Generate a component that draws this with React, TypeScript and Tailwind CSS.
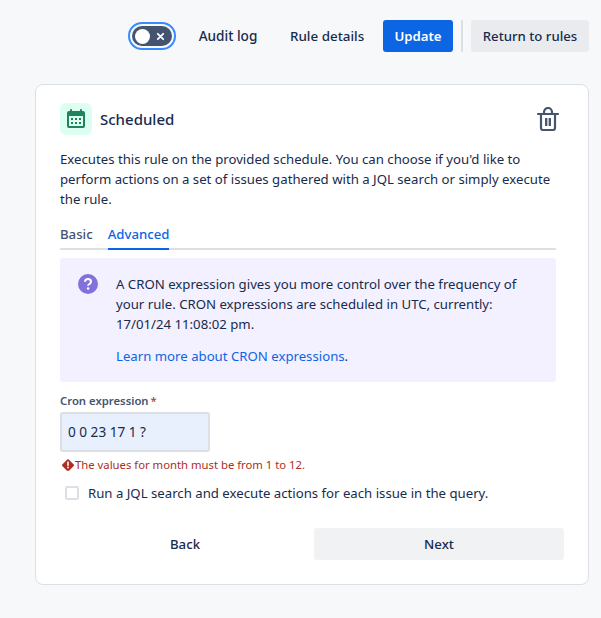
import React from "react";

function CalendarIcon() {
  return (
    <svg width="24" height="24" viewBox="0 0 24 24" fill="none">
      <path fillRule="evenodd" clipRule="evenodd" fill="#1f845a" d="M6 3a1 1 0 0 1 2 0v1h8V3a1 1 0 1 1 2 0v1h1a2 2 0 0 1 2 2v13a2 2 0 0 1-2 2H5a2 2 0 0 1-2-2V6a2 2 0 0 1 2-2h1V3zM5 9v10h14V9H5z" />
      <rect x="7" y="11" width="2" height="2" fill="#1f845a" />
      <rect x="11" y="11" width="2" height="2" fill="#1f845a" />
      <rect x="15" y="11" width="2" height="2" fill="#1f845a" />
      <rect x="7" y="15" width="2" height="2" fill="#1f845a" />
      <rect x="11" y="15" width="2" height="2" fill="#1f845a" />
      <rect x="15" y="15" width="2" height="2" fill="#1f845a" />
    </svg>
  );
}

function TrashIcon() {
  return (
    <svg width="24" height="24" viewBox="0 0 24 24" fill="none" stroke="#44546f" strokeWidth="2.2" className="-mr-1">
      <path d="M2 7h20" strokeLinecap="round" />
      <path d="M8 7V5a4 4 0 0 1 8 0v2" />
      <path d="M5 7v14a2 2 0 0 0 2 2h10a2 2 0 0 0 2-2V7" />
      <path d="M10.2 11v8M13.8 11v8" strokeWidth="2.3" />
    </svg>
  );
}

function HelpIcon() {
  return (
    <svg width="20" height="20" viewBox="0 0 20 20" className="shrink-0">
      <circle cx="10" cy="10" r="10" fill="#8270db" />
      <path d="M7 7.8C7 6 8.3 5 10 5s3 1 3 2.7c0 2.3-2.9 2.3-2.9 4" fill="none" stroke="#fff" strokeWidth="2" />
      <circle cx="10.1" cy="14.6" r="1.25" fill="#fff" />
    </svg>
  );
}

function ErrorIcon() {
  return (
    <svg width="12" height="12" viewBox="0 0 12 12" className="shrink-0">
      <path d="M6 0.3a1 1 0 0 1 .7.3l5 5a1 1 0 0 1 0 1.4l-4.4 4.4a1 1 0 0 1-.7.3H5.4a1 1 0 0 1-.7-.3L.3 7a1 1 0 0 1 0-1.4l5-5a1 1 0 0 1 .7-.3z" fill="#ae2e24" />
      <rect x="5.2" y="2.6" width="1.6" height="4.2" fill="#fff" />
      <rect x="5.2" y="7.7" width="1.6" height="1.6" fill="#fff" />
    </svg>
  );
}

export default function App() {
  return (
    <div className="h-[618px] w-[601px] overflow-hidden bg-[#f7f8f9] font-['Noto_Sans',sans-serif] text-[13.2px] leading-5 text-[#172b4d]">
      <div className="flex h-[84px] items-start justify-end pt-5 pr-3">
        <div className="mt-[2px] mr-[22px] h-7 w-12 rounded-full border-2 border-[#388bff] p-[2px]">
          <div className="flex h-5 w-full items-center justify-between rounded-full bg-[#44546f] pr-[7px] pl-[3px]">
            <span className="h-[15px] w-[15px] rounded-full bg-white" />
            <svg width="9" height="9" viewBox="0 0 10 10" stroke="#fff" strokeWidth="2" strokeLinecap="round">
              <path d="M2 2l6 6M8 2l-6 6" />
            </svg>
          </div>
        </div>
        <button className="mr-8 h-8 w-[60px] text-[13.6px] font-medium whitespace-nowrap">Audit log</button>
        <button className="mr-[19px] h-8 w-[74px] text-[13.4px] font-medium whitespace-nowrap">Rule details</button>
        <button className="mr-2 h-8 w-[70px] rounded-[3px] bg-[#0c66e4] font-semibold text-white">Update</button>
        <div className="mr-2 h-8 w-[2px] bg-[#dcdfe4]" />
        <button className="h-8 w-[118px] rounded-[3px] bg-[#e9ebee] font-medium">Return to rules</button>
      </div>

      <div className="ml-[35px] h-[501px] w-[554px] rounded-lg border border-[#dcdfe4] bg-white pt-[18px] pl-6">
        <div className="flex h-8 w-[496px] items-center justify-between">
          <div className="flex items-center gap-2">
            <div className="flex h-8 w-8 items-center justify-center rounded-md bg-[#dcfff1]">
              <CalendarIcon />
            </div>
            <span className="text-[15px] font-medium">Scheduled</span>
          </div>
          <TrashIcon />
        </div>

        <p className="mt-[14px] w-[496px]">
          Executes this rule on the provided schedule. You can choose if you'd like to perform actions on a set of issues gathered with a JQL search or simply execute the rule.
        </p>

        <div className="mt-[15px] flex h-[26px] w-[496px] gap-[15px] border-b-2 border-[#dcdfe4]">
          <span className="font-medium text-[#44546f]">Basic</span>
          <span className="-mb-[2px] h-[26px] border-b-2 border-[#0c66e4] font-medium text-[#0c66e4]">Advanced</span>
        </div>

        <div className="mt-2 flex h-[124px] w-[496px] gap-[18px] rounded-[3px] bg-[#f3f0ff] pt-4 pl-[18px]">
          <HelpIcon />
          <div className="w-[410px]">
            <p>A CRON expression gives you more control over the frequency of your rule. CRON expressions are scheduled in UTC, currently: 17/01/24 11:08:02 pm.</p>
            <p className="mt-3">
              <a className="text-[#0c66e4]">Learn more about CRON expressions</a>.
            </p>
          </div>
        </div>

        <div className="mt-[11px] h-4 text-[11.3px] leading-4 font-semibold text-[#44546f]">
          Cron expression<span className="ml-[2px] font-normal text-[#ae2e24]">*</span>
        </div>
        <div className="mt-[3px] flex h-10 w-[150px] items-center rounded-[3px] border-2 border-[#dcdfe4] bg-[#e8f0fe] pl-[6px] text-[13.6px]">0 0 23 17 1 ?</div>
        <div className="mt-[5px] flex h-4 items-center gap-[1px] pl-[2px] text-[11.3px] leading-4 text-[#ae2e24]">
          <ErrorIcon />
          The values for month must be from 1 to 12.
        </div>
        <div className="mt-[10px] flex h-5 items-center gap-[9px] pl-[5px]">
          <span className="h-[14px] w-[14px] rounded-[2px] border-2 border-[#dcdfe4] bg-white" />
          <span>Run a JQL search and execute actions for each issue in the query.</span>
        </div>

        <div className="mt-[25px] flex w-[504px] gap-1">
          <button className="h-8 w-[250px] rounded-[3px] font-medium">Back</button>
          <button className="h-8 w-[250px] rounded-[3px] bg-[#f1f2f4] font-medium">Next</button>
        </div>
      </div>
    </div>
  );
}
